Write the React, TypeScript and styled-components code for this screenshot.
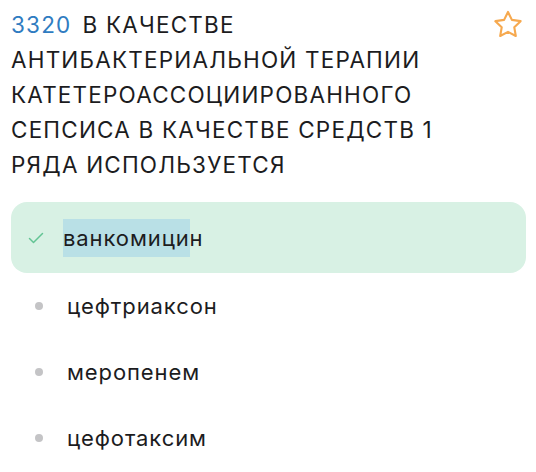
import React from "react";
import styled, { createGlobalStyle } from "styled-components";

const Global = createGlobalStyle`
  html, body {
    margin: 0;
    padding: 0;
    background: #ffffff;
  }
  body {
    font-family: Inter, "Noto Sans", sans-serif;
    color: #1c1c1e;
    -webkit-font-smoothing: antialiased;
  }
`;

const Card = styled.div`
  width: 536px;
  padding: 7px 9px 0 11px;
  box-sizing: border-box;
`;

const Header = styled.div`
  display: flex;
  align-items: flex-start;
  justify-content: space-between;
`;

const Title = styled.div`
  width: 460px;
  font-size: 22.5px;
  line-height: 35px;
  font-weight: 400;
  letter-spacing: 1.2px;
  color: #1c1c1e;
`;

const Num = styled.span`
  color: #2f7cc1;
  margin-right: 11px;
`;

const StarButton = styled.div`
  width: 38px;
  height: 36px;
  display: flex;
  align-items: center;
  justify-content: center;
`;

const Options = styled.div`
  display: flex;
  flex-direction: column;
  margin-top: 20px;
`;

const Option = styled.div<{ $correct?: boolean }>`
  display: flex;
  align-items: center;
  height: ${(p) => (p.$correct ? "71px" : "66px")};
  border-radius: 16px;
  background: ${(p) => (p.$correct ? "#d8f1e4" : "transparent")};
  padding-left: ${(p) => (p.$correct ? "17px" : "24px")};
  margin-right: 1px;
  font-size: 22px;
  letter-spacing: 0.9px;
  color: #1c1c1e;
`;

const Marker = styled.div<{ $w: number }>`
  width: ${(p) => p.$w}px;
  display: flex;
  align-items: center;
  flex-shrink: 0;
`;

const Dot = styled.span`
  width: 8px;
  height: 8px;
  border-radius: 50%;
  background: #c4c4c6;
`;

const Selected = styled.span`
  background: #b9e0e6;
  padding: 6px 0;
`;

const Star = () => (
  <svg width="36" height="34" viewBox="0 0 24 24" fill="none" stroke="#f6a94f" strokeWidth="1.5" strokeLinejoin="round">
    <path d="M12 2.8l2.75 5.6 6.15.9-4.45 4.35 1.05 6.1L12 16.85 6.5 19.75l1.05-6.1L3.1 9.3l6.15-.9L12 2.8z" />
  </svg>
);

const Check = () => (
  <svg width="16" height="12" viewBox="0 0 16 12" fill="none" stroke="#62c494" strokeWidth="1.5" strokeLinecap="round" strokeLinejoin="round">
    <path d="M1.5 6.5l4 4L14.5 1.5" />
  </svg>
);

export default function App() {
  return (
    <>
      <Global />
      <Card>
        <Header>
          <Title>
            <Num>3320</Num>В КАЧЕСТВЕ АНТИБАКТЕРИАЛЬНОЙ ТЕРАПИИ КАТЕТЕРОАССОЦИИРОВАННОГО СЕПСИСА В КАЧЕСТВЕ СРЕДСТВ 1 РЯДА ИСПОЛЬЗУЕТСЯ
          </Title>
          <StarButton>
            <Star />
          </StarButton>
        </Header>
        <Options>
          <Option $correct>
            <Marker $w={35}>
              <Check />
            </Marker>
            <span>
              <Selected>ванкомици</Selected>н
            </span>
          </Option>
          <Option>
            <Marker $w={32}>
              <Dot />
            </Marker>
            цефтриаксон
          </Option>
          <Option>
            <Marker $w={32}>
              <Dot />
            </Marker>
            меропенем
          </Option>
          <Option>
            <Marker $w={32}>
              <Dot />
            </Marker>
            цефотаксим
          </Option>
        </Options>
      </Card>
    </>
  );
}
